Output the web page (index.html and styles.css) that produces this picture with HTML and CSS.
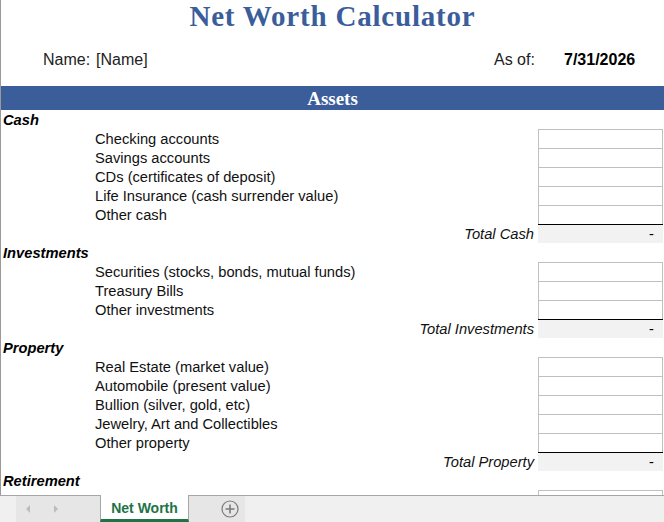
FILE: index.html
```html
<!DOCTYPE html>
<html lang="en">
<head>
    <meta charset="UTF-8">
    <title>Net Worth Calculator</title>
    <link rel="stylesheet" href="styles.css">
</head>
<body>
    <div class="sheet">
        <h1 class="title">Net Worth Calculator</h1>
        <div class="info">
            <span class="info-label">Name:</span>
            <span class="info-name">[Name]</span>
            <span class="info-asof">As of:</span>
            <span class="info-date">7/31/2026</span>
        </div>
        <div class="band">Assets</div>

        <div class="row"><span class="cat">Cash</span></div>
        <div class="row"><span class="item">Checking accounts</span><span class="cell"></span></div>
        <div class="row"><span class="item">Savings accounts</span><span class="cell"></span></div>
        <div class="row"><span class="item">CDs (certificates of deposit)</span><span class="cell"></span></div>
        <div class="row"><span class="item">Life Insurance (cash surrender value)</span><span class="cell"></span></div>
        <div class="row"><span class="item">Other cash</span><span class="cell"></span></div>
        <div class="row"><span class="total-label">Total Cash</span><span class="total">-</span></div>

        <div class="row"><span class="cat">Investments</span></div>
        <div class="row"><span class="item">Securities (stocks, bonds, mutual funds)</span><span class="cell"></span></div>
        <div class="row"><span class="item">Treasury Bills</span><span class="cell"></span></div>
        <div class="row"><span class="item">Other investments</span><span class="cell"></span></div>
        <div class="row"><span class="total-label">Total Investments</span><span class="total">-</span></div>

        <div class="row"><span class="cat">Property</span></div>
        <div class="row"><span class="item">Real Estate (market value)</span><span class="cell"></span></div>
        <div class="row"><span class="item">Automobile (present value)</span><span class="cell"></span></div>
        <div class="row"><span class="item">Bullion (silver, gold, etc)</span><span class="cell"></span></div>
        <div class="row"><span class="item">Jewelry, Art and Collectibles</span><span class="cell"></span></div>
        <div class="row"><span class="item">Other property</span><span class="cell"></span></div>
        <div class="row"><span class="total-label">Total Property</span><span class="total">-</span></div>

        <div class="row"><span class="cat">Retirement</span></div>
        <div class="row"><span class="item"></span><span class="cell"></span></div>
    </div>

    <div class="tabbar">
        <div class="nav">
            <span class="arrow arrow-left"></span>
            <span class="arrow arrow-right"></span>
        </div>
        <div class="tab">Net Worth</div>
        <div class="add">
            <svg width="18" height="18" viewBox="0 0 18 18">
                <circle cx="9" cy="9" r="8" fill="none" stroke="#7a7a7a" stroke-width="1.2"/>
                <path d="M9 4.5v9M4.5 9h9" stroke="#7a7a7a" stroke-width="1.6"/>
            </svg>
        </div>
    </div>
</body>
</html>
```

FILE: styles.css
```css
body {
    margin: 0;
    font-family: "Liberation Sans", Arial, sans-serif;
    color: #000;
    background: #fff;
}
.sheet {
    height: 495px;
    overflow: hidden;
    border-left: 1px solid #9a9a9a;
}
.title {
    margin: 0;
    height: 33px;
    font-family: "Liberation Serif", "Times New Roman", serif;
    font-size: 29px;
    font-weight: bold;
    letter-spacing: 0.8px;
    line-height: 32px;
    text-align: center;
    color: #3a5d9b;
}
.info {
    display: flex;
    align-items: center;
    height: 53px;
    font-size: 16px;
    color: #222;
}
.info-label {
    margin-left: 42px;
    width: 53px;
}
.info-name {
    width: 398px;
}
.info-asof {
    width: 70px;
}
.info-date {
    font-weight: bold;
    color: #000;
}
.band {
    height: 24px;
    background: #3b5e9b;
    color: #fff;
    font-family: "Liberation Serif", "Times New Roman", serif;
    font-size: 19px;
    font-weight: bold;
    line-height: 26px;
    text-align: center;
}
.row {
    display: flex;
    height: 19px;
    line-height: 19px;
    font-size: 14.7px;
}
.cat,
.item,
.total-label {
    padding-top: 1px;
}
.cat {
    padding-left: 2px;
    font-weight: bold;
    font-style: italic;
}
.item {
    flex: 1;
    padding-left: 94px;
    color: #111;
}
.cell {
    box-sizing: border-box;
    width: 125px;
    margin-right: 1px;
    border: 1px solid #c0c0c0;
    border-bottom: none;
}
.total-label {
    flex: 1;
    padding-right: 4px;
    text-align: right;
    font-style: italic;
    color: #111;
}
.total {
    box-sizing: border-box;
    width: 125px;
    margin-right: 1px;
    padding-right: 9px;
    border-top: 1px solid #000;
    background: #f2f2f2;
    text-align: right;
    line-height: 19px;
}
.tabbar {
    display: flex;
    height: 26px;
    border-top: 1px solid #a6a6a6;
    background: #f0f0f0;
    padding-left: 16px;
}
.nav {
    display: flex;
    align-items: center;
    width: 84px;
    background: #e6e6e6;
}
.arrow {
    width: 0;
    height: 0;
    border-top: 4px solid transparent;
    border-bottom: 4px solid transparent;
}
.arrow-left {
    margin-left: 10px;
    border-right: 4px solid #bcbcbc;
}
.arrow-right {
    margin-left: 24px;
    border-left: 4px solid #bcbcbc;
}
.tab {
    box-sizing: border-box;
    width: 89px;
    height: 27px;
    margin-top: -1px;
    border-left: 1px solid #a6a6a6;
    border-right: 1px solid #a6a6a6;
    border-bottom: 3px solid #217346;
    background: #fff;
    color: #217346;
    font-size: 14px;
    font-weight: bold;
    line-height: 26px;
    text-align: center;
}
.add {
    display: flex;
    align-items: center;
    width: 56px;
    padding-left: 32px;
    box-sizing: border-box;
    background: #e6e6e6;
}
```
